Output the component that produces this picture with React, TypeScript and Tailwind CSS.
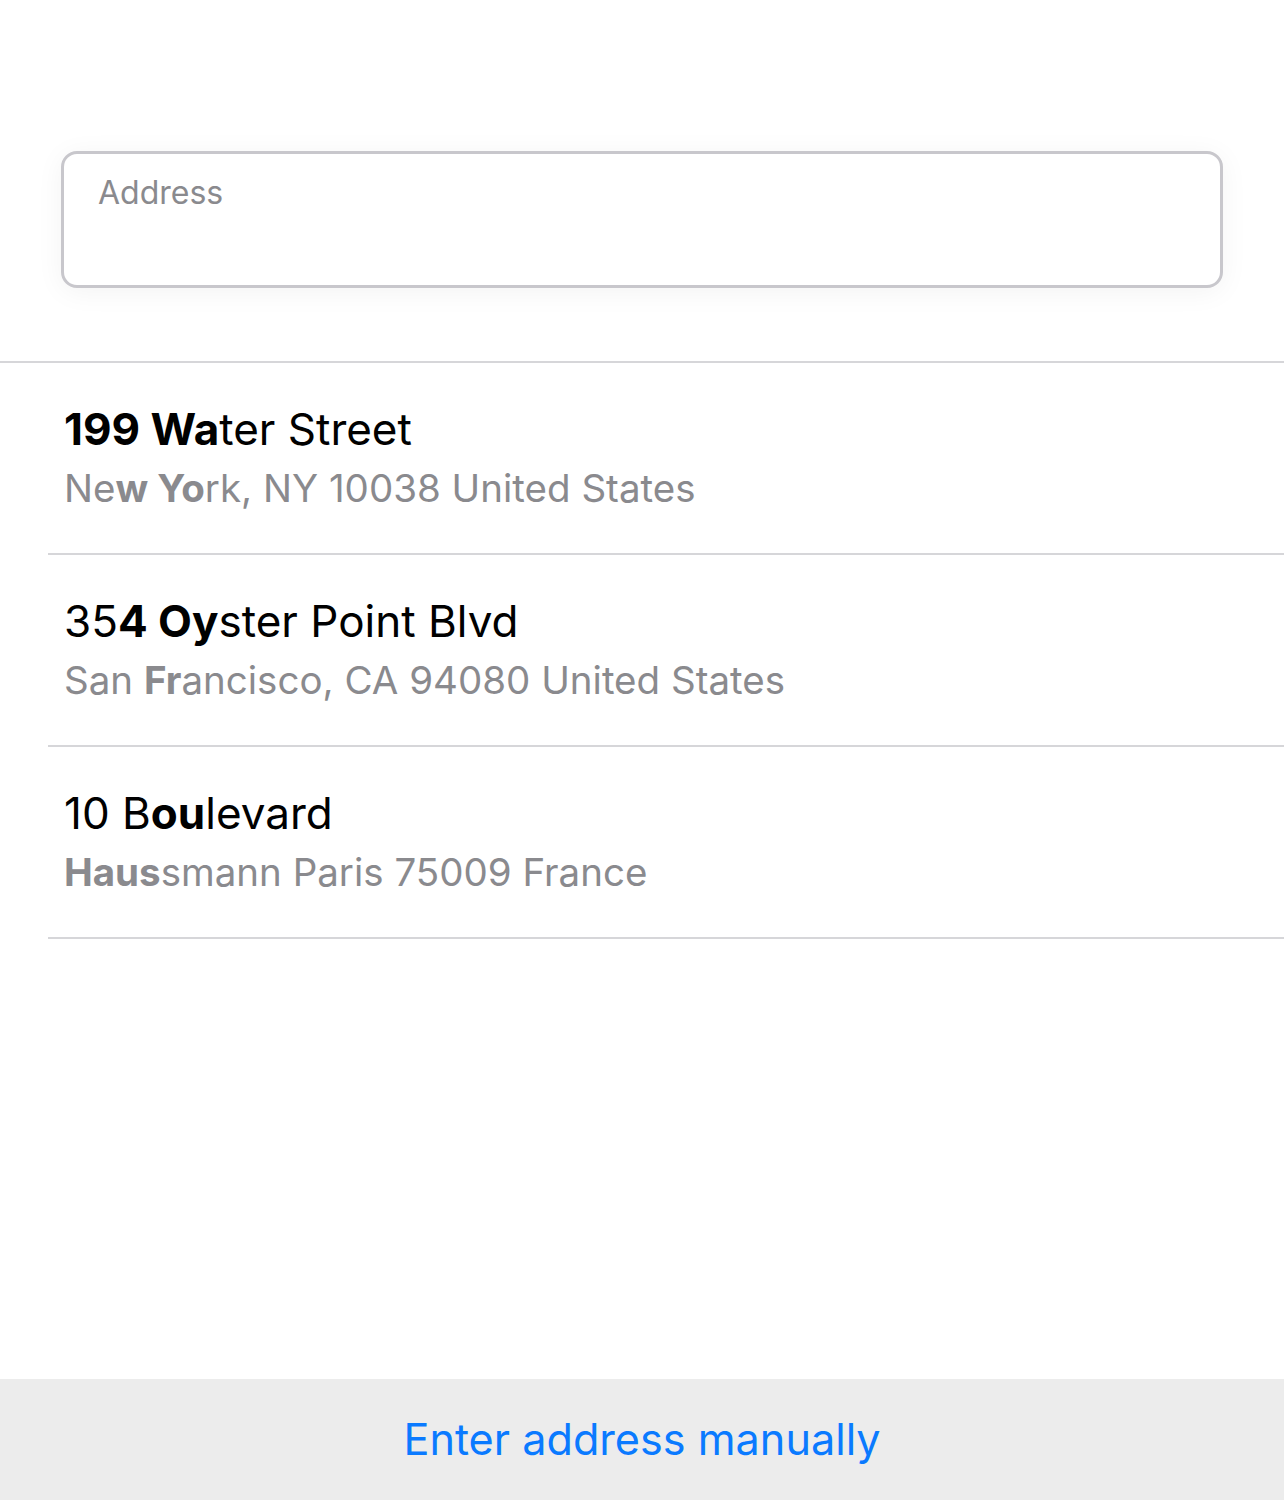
type Segment = { text: string; bold?: boolean };

type AddressSuggestion = {
  id: string;
  title: Segment[];
  subtitle: Segment[];
};

const suggestions: AddressSuggestion[] = [
  {
    id: "water",
    title: [{ text: "199 Wa", bold: true }, { text: "ter Street" }],
    subtitle: [{ text: "Ne" }, { text: "w Yo", bold: true }, { text: "rk, NY 10038 United States" }],
  },
  {
    id: "oyster",
    title: [{ text: "35" }, { text: "4 Oy", bold: true }, { text: "ster Point Blvd" }],
    subtitle: [{ text: "San " }, { text: "Fr", bold: true }, { text: "ancisco, CA 94080 United States" }],
  },
  {
    id: "haussmann",
    title: [{ text: "10 B" }, { text: "ou", bold: true }, { text: "levard" }],
    subtitle: [{ text: "Haus", bold: true }, { text: "smann Paris 75009 France" }],
  },
];

function Highlighted({ segments }: { segments: Segment[] }) {
  return (
    <>
      {segments.map((segment, index) => (
        <span key={index} className={segment.bold ? "font-bold" : "font-normal"}>
          {segment.text}
        </span>
      ))}
    </>
  );
}

export default function App() {
  return (
    <div className="flex min-h-[1500px] flex-col bg-white font-['Inter','Liberation_Sans',sans-serif] antialiased">
      <div className="px-[61px] pb-[73px] pt-[151px]">
        <label className="block h-[137px] rounded-[16px] border-[3px] border-[#c8c7cc] bg-white px-[34px] pt-[18px] shadow-[0_4px_28px_rgba(0,0,0,0.05)]">
          <input
            className="w-full bg-transparent text-[32px] leading-[42px] text-black outline-none placeholder:text-[#8a8a8e]"
            placeholder="Address"
            type="text"
          />
        </label>
      </div>

      <ul className="border-t-2 border-[#d6d6d9]">
        {suggestions.map((item) => (
          <li key={item.id} className="ml-[48px] flex h-[192px] flex-col justify-center border-b-2 border-[#d6d6d9] pl-[16px]">
            <p className="text-[44px] leading-[56px] text-black">
              <Highlighted segments={item.title} />
            </p>
            <p className="mt-[3px] text-[38.5px] leading-[56px] text-[#8a8a8e]">
              <Highlighted segments={item.subtitle} />
            </p>
          </li>
        ))}
      </ul>

      <div className="flex-1" />

      <button className="flex h-[121px] w-full items-center justify-center bg-[#ececec] text-[43.2px] text-[#0a7aff]" type="button">
        Enter address manually
      </button>
    </div>
  );
}
